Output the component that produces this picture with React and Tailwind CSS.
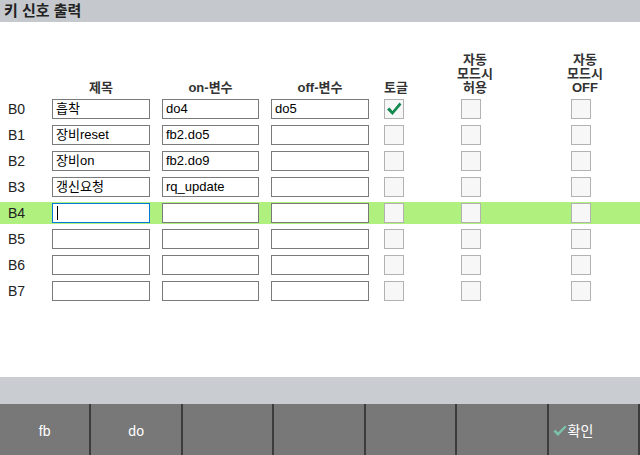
import React from "react";

const rows = [
  { id: "B0", title: "흡착", on: "do4", off: "do5", toggle: true },
  { id: "B1", title: "장비reset", on: "fb2.do5", off: "" },
  { id: "B2", title: "장비on", on: "fb2.do9", off: "" },
  { id: "B3", title: "갱신요청", on: "rq_update", off: "" },
  { id: "B4", title: "", on: "", off: "", active: true },
  { id: "B5", title: "", on: "", off: "" },
  { id: "B6", title: "", on: "", off: "" },
  { id: "B7", title: "", on: "", off: "" },
];

const buttons = ["fb", "do", "", "", "", "", "확인"];

function Field({ value, focused }) {
  return (
    <div
      className={`h-[20px] bg-white border flex items-center pl-[3px] text-[13px] text-black ${
        focused ? "border-[#0078d7]" : "border-[#7a7a7a]"
      }`}
    >
      {focused ? <span className="w-px h-[14px] bg-black ml-[1px]" /> : value}
    </div>
  );
}

function Check({ checked }) {
  return (
    <div className="w-[20px] h-[20px] bg-[#f7f7f7] border border-[#b2b2b2] flex items-center justify-center">
      {checked && (
        <svg width="18" height="18" viewBox="0 0 18 18">
          <path d="M2 9.5 L4.5 7.5 L7.5 11 L14.5 2.5 L16.5 4.5 L7.5 15 Z" fill="#13884f" />
        </svg>
      )}
    </div>
  );
}

export default function App() {
  return (
    <div
      className="w-[640px] h-[455px] flex flex-col bg-white overflow-hidden"
      style={{ fontFamily: '"Liberation Sans", "Noto Sans CJK KR", sans-serif' }}
    >
      {/* 제목줄 */}
      <div className="h-[22px] bg-[#c5c9cd] flex items-center pl-[4px]">
        <span className="text-[15px] font-bold text-[#222]">키 신호 출력</span>
      </div>

      <div className="flex-1">
        {/* 헤더 */}
        <div className="flex items-end h-[42px] mt-[31px] mb-[3px] pl-[8px] text-[13px] leading-[14px] font-bold text-[#333] text-center">
          <div className="w-[44px]" />
          <div className="w-[98px]">제목</div>
          <div className="w-[12px]" />
          <div className="w-[97px]">on-변수</div>
          <div className="w-[12px]" />
          <div className="w-[98px]">off-변수</div>
          <div className="w-[12px]" />
          <div className="w-[30px]">토글</div>
          <div className="w-[42px]" />
          <div className="w-[44px]">
            자동
            <br />
            모드시
            <br />
            허용
          </div>
          <div className="w-[66px]" />
          <div className="w-[44px]">
            자동
            <br />
            모드시
            <br />
            OFF
          </div>
        </div>

        {/* 행 */}
        {rows.map((r) => (
          <div key={r.id} className="h-[26px]">
            <div
              className={`h-[22px] flex items-center pl-[8px] ${r.active ? "bg-[#aff07f]" : ""}`}
            >
              <div className="w-[44px] text-[14px] text-[#222]">{r.id}</div>
              <div className="w-[98px]">
                <Field value={r.title} focused={r.active} />
              </div>
              <div className="w-[12px]" />
              <div className="w-[97px]">
                <Field value={r.on} />
              </div>
              <div className="w-[12px]" />
              <div className="w-[98px]">
                <Field value={r.off} />
              </div>
              <div className="w-[15px]" />
              <Check checked={r.toggle} />
              <div className="w-[57px]" />
              <Check />
              <div className="w-[90px]" />
              <Check />
            </div>
          </div>
        ))}
      </div>

      <div className="h-[27px] bg-[#c9ccd0]" />

      {/* 하단 버튼 */}
      <div className="h-[51px] bg-[#787878] grid grid-cols-7">
        {buttons.map((b, i) =>
          b === "확인" ? (
            <div
              key={i}
              className="flex items-center justify-start pl-[4px] pt-[3px] text-[14px] text-white border-r-2 border-[#3c3c3c]"
            >
              <svg width="14" height="12" viewBox="0 0 14 12" className="mr-[1px]">
                <path d="M0.5 6.5 L2.5 4.8 L5 7.5 L12 0.5 L13.5 2 L5 11 Z" fill="#7cc3ad" />
              </svg>
              {b}
            </div>
          ) : (
            <div
              key={i}
              className="flex items-center justify-center pt-[3px] text-[14px] text-white border-r-2 border-[#3c3c3c]"
            >
              {b}
            </div>
          )
        )}
      </div>
    </div>
  );
}
